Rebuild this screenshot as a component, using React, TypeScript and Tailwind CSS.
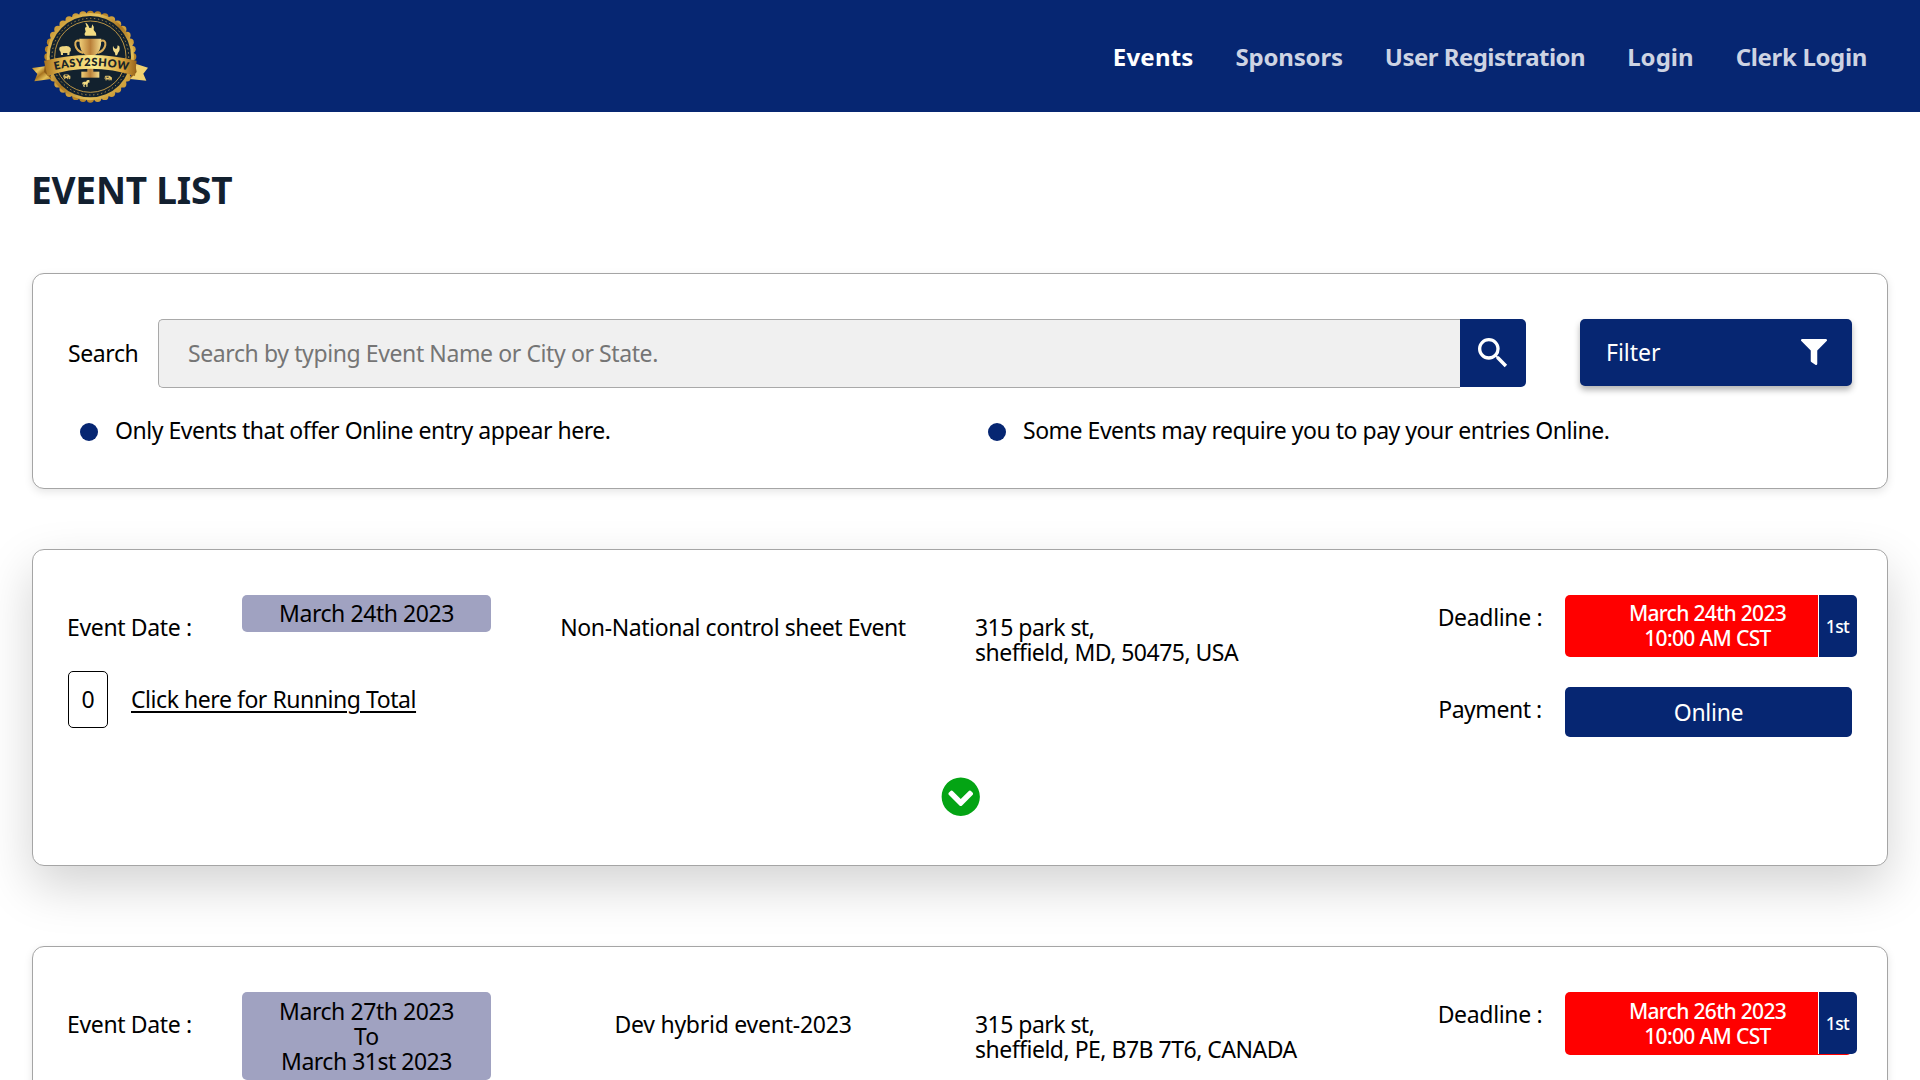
import { FaFilter, FaChevronCircleDown } from "react-icons/fa";
import { FaCow, FaHorse } from "react-icons/fa6";
import { MdSearch } from "react-icons/md";

const navItems = [
  { label: "Events", cls: "text-white tracking-[0.2px] mr-[42px]" },
  { label: "Sponsors", cls: "text-[#cdd3e3] tracking-[-0.2px] mr-[42px]" },
  { label: "User Registration", cls: "text-[#cdd3e3] tracking-[-0.52px] mr-[42px]" },
  { label: "Login", cls: "text-[#cdd3e3] tracking-[0.05px] mr-[42px]" },
  { label: "Clerk Login", cls: "text-[#cdd3e3] tracking-[-0.35px]" },
];

const scallops = Array.from({ length: 36 }, (_, i) => {
  const a = (i * Math.PI) / 18;
  return { x: 211 + 127 * Math.cos(a), y: 170 + 127 * Math.sin(a) };
});

function Logo() {
  return (
    <svg viewBox="0 0 450 336" className="h-[112px] w-[150px] shrink-0" aria-label="Easy2Show">
      <defs>
        <linearGradient id="gold" x1="0" y1="0" x2="1" y2="1">
          <stop offset="0" stopColor="#b9821f" />
          <stop offset="0.3" stopColor="#e6c45f" />
          <stop offset="0.5" stopColor="#a87420" />
          <stop offset="0.72" stopColor="#e3bf58" />
          <stop offset="1" stopColor="#b47d1d" />
        </linearGradient>
        <linearGradient id="band" x1="0" y1="0" x2="1" y2="0">
          <stop offset="0" stopColor="#a8731f" />
          <stop offset="0.2" stopColor="#e3b850" />
          <stop offset="0.55" stopColor="#fbec90" />
          <stop offset="0.85" stopColor="#d9a43c" />
          <stop offset="1" stopColor="#96631b" />
        </linearGradient>
        <linearGradient id="cup" x1="0" y1="0" x2="1" y2="0">
          <stop offset="0" stopColor="#f0cf78" />
          <stop offset="0.5" stopColor="#b97f38" />
          <stop offset="1" stopColor="#f3dc8c" />
        </linearGradient>
        <path id="arc" d="M104 210 Q214 184 328 212" />
      </defs>
      <g fill="url(#gold)">
        {scallops.map((s, i) => (
          <circle key={i} cx={s.x} cy={s.y} r="11" fill={i % 9 < 3 ? "#b98527" : "#cf9f3b"} />
        ))}
        <circle cx="211" cy="170" r="131" />
      </g>
      <circle cx="211" cy="170" r="122" fill="#12212e" />
      <circle cx="211" cy="170" r="115" fill="none" stroke="#b8954a" strokeWidth="3" strokeDasharray="4 8" />
      <circle cx="211" cy="170" r="107" fill="none" stroke="#b99345" strokeWidth="3" />
      <path d="M196 68 q8 2 12 16 q3 -2 6 1 l3 -12 q6 6 4 17 q8 7 8 17 h-33 q-5 -5 1 -12 l-2 -9 q-1 -5 5 -5 z" fill="#f3dc83" />
      <path d="M178 116 h66 q1 42 -24 52 v50 h-18 v-50 q-25 -10 -24 -52 z" fill="url(#cup)" />
      <path d="M180 123 q-16 -5 -14 12 q3 18 24 24 M242 123 q16 -5 14 12 q-3 18 -24 24" fill="none" stroke="#dcb05a" strokeWidth="6" />
      <rect x="184" y="215" width="54" height="18" fill="url(#cup)" />
      <path d="M118 143 q4 -6 14 -4 q14 -4 20 6 q2 8 -3 11 l-1 9 h-6 v-6 h-13 v6 h-6 l-1 -9 q-6 -5 -4 -13z" fill="#efd680" />
      <path d="M279 137 q2 9 9 10 q5 -2 5 -11 l5 3 q3 12 -3 18 l-4 9 h-5 l-1 -8 q-8 -6 -6 -21 z" fill="#f3dc8a" />
      <FaCow x="129" y="219" width="36" height="34" color="#e8c76b" />
      <FaHorse x="186" y="239" width="48" height="40" color="#f3dc83" />
      <FaCow x="253" y="223" width="38" height="32" color="#e8c76b" />
      <path d="M80 198 L36 204 L52 222 L43 244 L94 237 Z" fill="url(#gold)" />
      <path d="M342 190 L384 203 L370 221 L379 242 L330 237 Z" fill="#f0d170" />
      <path d="M94 237 L72 216 L76 184 Z M330 237 L350 216 L344 184 Z" fill="#8d5c18" />
      <path d="M72 182 Q211 148 350 182 L345 228 Q211 184 82 228 Z" fill="url(#band)" />
      <text fontFamily="Lato" fontWeight="800" fontSize="33" fill="#1c2627">
        <textPath href="#arc" textLength="222">EASY2SHOW</textPath>
      </text>
    </svg>
  );
}

type EventInfo = {
  dates: { text: string; cls: string }[];
  datePad: string;
  name: string;
  nameCls: string;
  city: string;
  cityCls: string;
  deadline: string;
  deadlinePad: string;
  payment?: string;
  shadow: string;
};

const events: EventInfo[] = [
  {
    dates: [{ text: "March 24th 2023", cls: "tracking-[-0.43px]" }],
    datePad: "py-[6px]",
    name: "Non-National control sheet Event",
    nameCls: "tracking-[-0.4px]",
    city: "sheffield, MD, 50475, USA",
    cityCls: "tracking-[-0.52px]",
    deadline: "March 24th 2023",
    deadlinePad: "h-[62px] pt-[6px]",
    payment: "Online",
    shadow: "shadow-[0_20px_50px_rgba(0,0,0,0.175)]",
  },
  {
    dates: [
      { text: "March 27th 2023", cls: "tracking-[-0.43px]" },
      { text: "To", cls: "" },
      { text: "March 31st 2023", cls: "tracking-[-0.49px]" },
    ],
    datePad: "pt-[7px] pb-[6px]",
    name: "Dev hybrid event-2023",
    nameCls: "tracking-[-0.25px]",
    city: "sheffield, PE, B7B 7T6, CANADA",
    cityCls: "tracking-[-0.5px]",
    deadline: "March 26th 2023",
    deadlinePad: "h-[63px] pt-[7px]",
    shadow: "shadow-[0_3px_8px_rgba(0,0,0,0.1)]",
  },
];

function EventCard({ e }: { e: EventInfo }) {
  return (
    <article className={`rounded-xl border border-[#a5a5a5] bg-white pt-[45px] pb-12 pl-[35px] ${e.shadow}`}>
      <div className="flex items-start">
        <div className="h-[142px] w-[423px]">
          <div className="flex h-[76px] items-start">
            <div className="-ml-px w-[175px] pt-5 tracking-[-0.35px]">Event Date :</div>
            <div className={`w-[249px] rounded-[5px] bg-[#a0a2c1] text-center ${e.datePad}`}>
              {e.dates.map((d) => (
                <div key={d.text} className={d.cls}>{d.text}</div>
              ))}
            </div>
          </div>
          {e.dates.length === 1 && (
            <div className="flex items-start">
              <div className="flex h-[57px] w-10 items-center justify-center rounded-[5px] border border-black text-[23px]">0</div>
              <a className="ml-[23px] mt-4 tracking-[-0.45px] underline decoration-2 underline-offset-[3px]">
                Click here for Running Total
              </a>
            </div>
          )}
        </div>
        <div className={`w-[484px] pt-5 text-center ${e.nameCls}`}>{e.name}</div>
        <div className="w-[440px] pt-5">
          <div className="tracking-[-0.54px]">315 park st,</div>
          <div className={e.cityCls}>{e.city}</div>
        </div>
        <div className="w-[437px]">
          <div className="flex h-[92px] items-start">
            <div className="w-[150px] pt-[10px] text-center tracking-[-0.33px]">Deadline :</div>
            <div className={`relative w-[287px] rounded-[5px] bg-[#ff0000] text-center text-[21px] font-medium text-white ${e.deadlinePad}`}>
              <div className="pr-[2px] tracking-[-0.68px]">{e.deadline}</div>
              <div className="pr-[2px] tracking-[-0.66px]">10:00 AM CST</div>
              <div className="absolute -right-[5px] top-0 flex h-[62px] w-[39px] items-center justify-center rounded-r-[5px] border-l border-white bg-[#062672] pr-px text-[17.5px] tracking-[-0.6px]">
                1st
              </div>
            </div>
          </div>
          {e.payment && (
            <div className="flex items-start">
              <div className="w-[150px] pt-[10px] text-center tracking-[-0.45px]">Payment :</div>
              <div className="h-[50px] w-[287px] rounded-[5px] bg-[#062672] pt-[13px] text-center tracking-[-0.3px] text-white">
                {e.payment}
              </div>
            </div>
          )}
        </div>
      </div>
      <div className="mt-[40px] flex h-10 justify-center pr-[34px]">
        <FaChevronCircleDown className="size-[39.5px] text-[#04a414]" />
      </div>
    </article>
  );
}

export default function App() {
  return (
    <div className="h-[1080px] w-[1920px] overflow-hidden bg-white font-['Noto_Sans',sans-serif] text-[23px] leading-[25px] text-black">
      <header className="flex h-28 items-center justify-between bg-[#062672] pl-5 pr-[53px]">
        <Logo />
        <nav className="flex pt-px text-[24px] font-bold">
          {navItems.map((n) => (
            <a key={n.label} className={n.cls}>{n.label}</a>
          ))}
        </nav>
      </header>
      <main className="px-8">
        <h1 className="-ml-px pt-[53px] pb-[58px] text-[37px] font-bold leading-[50px] tracking-[-0.2px] text-[#12202f]">
          EVENT LIST
        </h1>
        <section className="h-[216px] rounded-xl border border-[#a5a5a5] bg-white pl-[35px] pt-[45px] shadow-[0_3px_8px_rgba(0,0,0,0.1)]">
          <div className="flex items-start">
            <div className="w-[90px] pt-[22px] tracking-[-0.4px]">Search</div>
            <div className="flex w-[1368px] items-start">
              <div className="h-[69px] flex-1 rounded-l-[5px] border border-r-0 border-[#a9a9a9] bg-[#f0f0f0] pl-[29px] pt-[21px] tracking-[-0.4px] text-[#757575]">
                Search by typing Event Name or City or State.
              </div>
              <button className="flex h-[68px] w-[66px] items-center justify-center rounded-r-[5px] bg-[#062672]">
                <MdSearch className="size-10 text-white" />
              </button>
            </div>
            <button className="ml-[54px] flex h-[67px] w-[272px] items-center justify-between rounded-[5px] bg-[#062672] pl-[26px] pr-[25px] text-white shadow-[0_4px_6px_rgba(0,0,0,0.3)]">
              <span className="pb-px">Filter</span>
              <FaFilter className="mb-[2px] size-[26px]" />
            </button>
          </div>
          <div className="mt-[30px] flex items-start">
            <div className="flex w-[907px] pl-[12px] tracking-[-0.48px]">
              <span className="mr-[17px] mt-[5px] size-[18px] rounded-full bg-[#062672]" />
              Only Events that offer Online entry appear here.
            </div>
            <div className="flex pl-[13px] tracking-[-0.48px]">
              <span className="mr-[17px] mt-[5px] size-[18px] rounded-full bg-[#062672]" />
              Some Events may require you to pay your entries Online.
            </div>
          </div>
        </section>
        <div className="mt-[60px] flex flex-col gap-20">
          {events.map((e) => (
            <EventCard key={e.name} e={e} />
          ))}
        </div>
      </main>
    </div>
  );
}
